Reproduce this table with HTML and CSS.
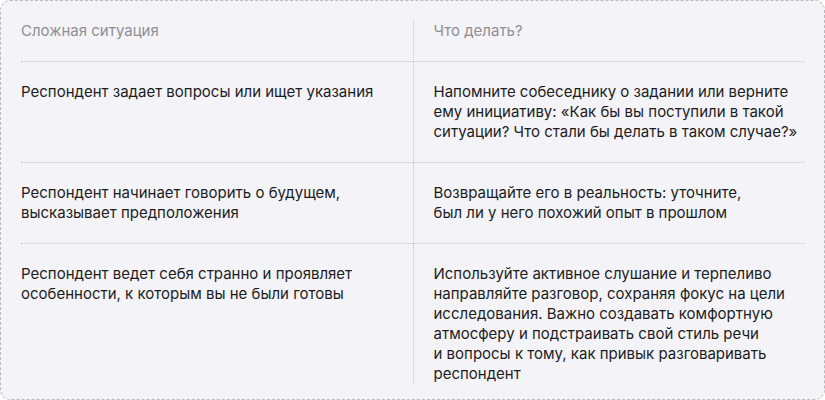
FILE: index.html
```html
<!DOCTYPE html>
<html lang="ru">
<head>
<meta charset="utf-8">
<link rel="stylesheet" href="styles.css">
</head>
<body>
<div class="card">
  <div class="table">
    <div class="cell left head">Сложная ситуация</div>
    <div class="cell right head">Что делать?</div>

    <div class="cell left">Респондент задает вопросы или ищет указания</div>
    <div class="cell right">Напомните собеседнику о&nbsp;задании или верните ему инициативу: «Как бы вы поступили в&nbsp;такой ситуации? Что стали бы делать в&nbsp;таком случае?»</div>

    <div class="cell left">Респондент начинает говорить о&nbsp;будущем, <br>высказывает предположения</div>
    <div class="cell right">Возвращайте его в&nbsp;реальность: уточните, <br>был ли у&nbsp;него похожий опыт в&nbsp;прошлом</div>

    <div class="cell left last">Респондент ведет себя странно и&nbsp;проявляет особенности, к&nbsp;которым вы не были готовы</div>
    <div class="cell right last">Используйте активное слушание и&nbsp;терпеливо направляйте разговор, сохраняя фокус на&nbsp;цели исследования. Важно создавать комфортную атмосферу и&nbsp;подстраивать свой стиль речи <br>и&nbsp;вопросы к&nbsp;тому, как привык разговаривать респондент</div>
  </div>
</div>
</body>
</html>
```

FILE: styles.css
```css
* { box-sizing: border-box; }
html, body { margin: 0; padding: 0; background: #ffffff; }
body {
  width: 825px;
  height: 400px;
  font-family: Inter, "Noto Sans", sans-serif;
  font-size: 15px;
  line-height: 20px;
  color: #1c1c1e;
}
.card {
  width: 825px;
  height: 400px;
  background: #f4f4f8;
  border: 1px dashed #b9b9be;
  border-radius: 10px;
  padding: 20px;
}
.table {
  display: grid;
  grid-template-columns: 1fr 1fr;
}
.cell {
  padding: 20px 0;
  border-bottom: 1px dotted #c3c3c8;
}
.cell.left { padding-right: 20px; }
.cell.right {
  padding-left: 20px;
  padding-right: 0;
  border-left: 1px dotted #c3c3c8;
}
.cell.head {
  padding-top: 0;
  color: #8e8e94;
  font-size: 15px;
}
.cell.last {
  padding-bottom: 0;
  border-bottom: none;
}
```
